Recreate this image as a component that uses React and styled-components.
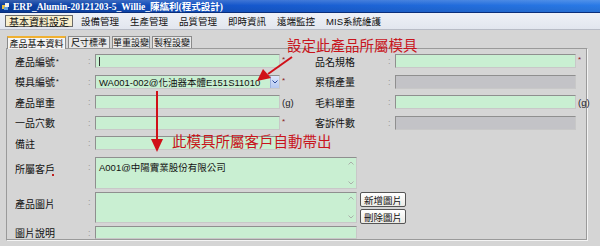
import React from 'react'
import styled, { createGlobalStyle } from 'styled-components'

const GlobalStyle = createGlobalStyle`
  html, body { margin: 0; padding: 0; background: #d5d5d5; overflow: hidden; }
  * { box-sizing: border-box; }
`

const CJK = `"Liberation Sans", "Noto Sans CJK TC", sans-serif`

const Window = styled.div`
  position: relative;
  width: 600px;
  height: 246px;
  background: #d5d5d5;
  font-family: ${CJK};
  overflow: hidden;
`

const TitleBar = styled.div`
  height: 13px;
  display: flex;
  align-items: center;
  gap: 3px;
  padding-left: 2px;
  background: linear-gradient(180deg, rgba(255,255,255,0.18), rgba(255,255,255,0) 45%, rgba(0,0,0,0.08)),
    linear-gradient(90deg, #0b3d9c 0%, #1557cc 40%, #2a7ae6 100%);
  border-bottom: 1px solid #0a2e7a;
  color: #fff;
  font-family: "Liberation Serif", "Noto Sans CJK TC", serif;
  font-weight: bold;
  font-size: 9.5px;
  white-space: nowrap;
`

const MenuBar = styled.div`
  height: 17px;
  display: flex;
  align-items: center;
  padding-left: 5px;
  background: linear-gradient(180deg, #eef1f7, #e2e6ee);
  border-bottom: 1px solid #b8bcc6;
`

const MenuItem = styled.div`
  height: 12px;
  display: flex;
  align-items: center;
  padding: 0 ${p => (p.$active ? 3 : 2)}px;
  margin-right: ${p => (p.$active ? 5 : 5)}px;
  font-size: ${p => (p.$active ? 10 : 9.5)}px;
  color: #111;
  white-space: nowrap;
  background: ${p => (p.$active ? '#f8eecb' : 'transparent')};
  border: 1px solid ${p => (p.$active ? '#6a6a6a' : 'transparent')};
`

const Content = styled.div`
  padding: 6px 0 0 6px;
`

const Tabs = styled.div`
  display: flex;
  align-items: flex-end;
  gap: 2px;
  padding-left: 1px;
  height: 12px;
`

const Tab = styled.div`
  height: ${p => (p.$active ? 13 : 12)}px;
  width: ${p => p.$w}px;
  display: flex;
  align-items: center;
  justify-content: center;
  font-size: 9px;
  white-space: nowrap;
  color: #111;
  background: ${p => (p.$active ? '#f4f4f4' : '#e8e8e8')};
  border: 1px solid #8a8a8a;
  border-bottom: none;
  ${p => p.$active && 'border-top: 2px solid #f0b030; margin-bottom: -1px; position: relative; z-index: 1;'}
`

const Panel = styled.div`
  width: 582px;
  height: 193px;
  border: 1px solid #9a9a9a;
  border-right-color: #f4f4f4;
  border-bottom-color: #f4f4f4;
  box-shadow: inset -1px -1px 0 #9a9a9a;
  padding: 5px 0 0 8px;
`

const Grid = styled.div`
  display: grid;
  grid-template-columns: 73px 7px 185px 35px 73px 7px 181px 12px;
  grid-auto-rows: 14px;
  row-gap: 6.5px;
`

const Label = styled.div`
  font-size: 10px;
  color: #111;
  display: flex;
  align-items: ${p => (p.$top ? 'flex-start' : 'center')};
  padding-top: ${p => (p.$top ? 4 : 0)}px;
  position: relative;
  white-space: nowrap;
  sup { font-size: 7px; margin-left: 1px; }
`

const ReqDot = styled.span`
  position: absolute;
  left: 37px;
  top: 17px;
  width: 2px;
  height: 2px;
  background: #c02020;
`

const Colon = styled.div`
  font-size: 9px;
  color: #9a9a9a;
  display: flex;
  align-items: ${p => (p.$top ? 'flex-start' : 'center')};
  padding-top: ${p => (p.$top ? 5 : 0)}px;
`

const Field = styled.div`
  height: ${p => p.$h || 14}px;
  width: ${p => (p.$w ? `${p.$w}px` : 'auto')};
  background: ${p => (p.$grey ? '#c3c3c7' : '#c9efd2')};
  border: 1px solid #8f8f8f;
  border-right-color: #c8c8c8;
  border-bottom-color: #c8c8c8;
  display: flex;
  align-items: ${p => (p.$top ? 'flex-start' : 'center')};
  padding: ${p => (p.$top ? '2px 3px' : '0 3px')};
  font-size: 9.5px;
  color: #111;
  position: relative;
  white-space: nowrap;
`

const Caret = styled.span`
  width: 1px;
  height: 9px;
  background: #333;
`

const ComboButton = styled.div`
  position: absolute;
  right: 0;
  top: 0;
  bottom: 0;
  width: 9px;
  background: linear-gradient(180deg, #dbe6fb, #b5c8ef);
  border-left: 1px solid #9fb3de;
  display: flex;
  align-items: center;
  justify-content: center;
`

const Suffix = styled.div`
  font-size: ${p => (p.$star ? 8 : 9.5)}px;
  color: ${p => (p.$star ? '#8a2020' : '#222')};
  display: flex;
  align-items: ${p => (p.$star ? 'flex-start' : 'center')};
  padding-left: 2px;
  padding-top: ${p => (p.$star ? 1 : 0)}px;
`

const Lower = styled.div`
  display: flex;
  flex-direction: column;
  gap: 3px;
  margin-top: 7px;
`

const LowerRow = styled.div`
  display: flex;
  height: ${p => p.$h}px;
`

const LabelBox = styled(Label)`
  width: 73px;
`

const ColonBox = styled(Colon)`
  width: 7px;
`

const ScrollTrack = styled.div`
  position: absolute;
  right: 1px;
  top: 1px;
  bottom: 1px;
  width: 8px;
  display: flex;
  flex-direction: column;
  justify-content: space-between;
  align-items: center;
  padding: 2px 0;
`

const Buttons = styled.div`
  display: flex;
  flex-direction: column;
  gap: 2px;
  margin-left: 3px;
`

const Button = styled.div`
  width: 46px;
  height: 15px;
  border: 1px solid #555;
  border-radius: 2px;
  background: linear-gradient(180deg, #ffffff, #ecebe6);
  font-size: 9.5px;
  color: #111;
  display: flex;
  align-items: center;
  justify-content: center;
`

const Note = styled.div`
  position: absolute;
  left: ${p => p.$x}px;
  top: ${p => p.$y}px;
  color: #c8141c;
  font-family: "Noto Sans CJK TC", sans-serif;
  font-size: 14.5px;
  line-height: 1;
  white-space: nowrap;
`

const Overlay = styled.svg`
  position: absolute;
  left: 0;
  top: 0;
  pointer-events: none;
`

function AppIcon() {
  return (
    <svg width="8" height="9" viewBox="0 0 8 9">
      <rect x="0" y="3" width="4" height="4" fill="#e8c040" />
      <rect x="3" y="1" width="4" height="4" fill="#f0f0f0" />
      <rect x="2" y="5" width="4" height="3" fill="#60a0e0" />
    </svg>
  )
}

function Chevron({ up, color = '#aab0aa' }) {
  return (
    <svg width="6" height="4" viewBox="0 0 6 4">
      <path d={up ? 'M0.5 3.5 L3 1 L5.5 3.5' : 'M0.5 0.5 L3 3 L5.5 0.5'} stroke={color} strokeWidth="1" fill="none" />
    </svg>
  )
}

function Scroll() {
  return (
    <ScrollTrack>
      <Chevron up />
      <Chevron />
    </ScrollTrack>
  )
}

const menus = [
  { t: '基本資料設定', active: true },
  { t: '設備管理' },
  { t: '生產管理' },
  { t: '品質管理' },
  { t: '即時資訊' },
  { t: '遠端監控' },
  { t: 'MIS系統維護' },
]

const tabs = [
  { t: '產品基本資料', w: 59, active: true },
  { t: '尺寸標準', w: 42 },
  { t: '單重設變', w: 38 },
  { t: '製程設變', w: 40 },
]

export default function App() {
  return (
    <Window>
      <GlobalStyle />
      <TitleBar>
        <AppIcon />
        <span>ERP_Alumin-20121203-5_Willie_陳紘利(程式設計)</span>
      </TitleBar>
      <MenuBar>
        {menus.map(m => (
          <MenuItem key={m.t} $active={m.active}>{m.t}</MenuItem>
        ))}
      </MenuBar>
      <Content>
        <Tabs>
          {tabs.map(t => (
            <Tab key={t.t} $w={t.w} $active={t.active}>{t.t}</Tab>
          ))}
        </Tabs>
        <Panel>
          <Grid>
            <Label>產品編號<sup>*</sup></Label>
            <Colon>:</Colon>
            <Field><Caret /></Field>
            <Suffix $star>*</Suffix>
            <Label>品名規格</Label>
            <Colon>:</Colon>
            <Field />
            <Suffix $star>*</Suffix>

            <Label>模具編號<sup>*</sup></Label>
            <Colon>:</Colon>
            <Field>
              WA001-002@化油器本體E151S11010
              <ComboButton>
                <Chevron color="#2a4a9a" />
              </ComboButton>
            </Field>
            <Suffix $star>*</Suffix>
            <Label>累積產量</Label>
            <Colon>:</Colon>
            <Field $grey />
            <Suffix />

            <Label>產品單重</Label>
            <Colon>:</Colon>
            <Field />
            <Suffix>(g)</Suffix>
            <Label>毛料單重</Label>
            <Colon>:</Colon>
            <Field />
            <Suffix>(g)</Suffix>

            <Label>一品穴數</Label>
            <Colon>:</Colon>
            <Field />
            <Suffix $star>*</Suffix>
            <Label>客訴件數</Label>
            <Colon>:</Colon>
            <Field $grey />
            <Suffix />

            <Label>備註</Label>
            <Colon>:</Colon>
            <Field />
          </Grid>

          <Lower>
            <LowerRow $h={32}>
              <LabelBox $top>所屬客戶<ReqDot /></LabelBox>
              <ColonBox $top>:</ColonBox>
              <Field $w={262} $h={32} $top>
                A001@中陽實業股份有限公司
                <Scroll />
              </Field>
            </LowerRow>
            <LowerRow $h={31}>
              <LabelBox $top>產品圖片</LabelBox>
              <ColonBox $top>:</ColonBox>
              <Field $w={262} $h={31} $top>
                <Scroll />
              </Field>
              <Buttons>
                <Button>新增圖片</Button>
                <Button>刪除圖片</Button>
              </Buttons>
            </LowerRow>
            <LowerRow $h={13}>
              <LabelBox>圖片說明</LabelBox>
              <ColonBox>:</ColonBox>
              <Field $w={262} $h={13} />
            </LowerRow>
          </Lower>
        </Panel>
      </Content>

      <Note $x={287} $y={38}>設定此產品所屬模具</Note>
      <Note $x={172} $y={134}>此模具所屬客戶自動帶出</Note>

      <Overlay width="600" height="246">
        <line x1="292" y1="57" x2="268" y2="74" stroke="#d01018" strokeWidth="2" />
        <polygon points="257,81 263,69 271,78" fill="#d01018" />
        <line x1="157" y1="91" x2="157" y2="140" stroke="#d01018" strokeWidth="2" />
        <polygon points="151,139 163,139 157,152" fill="#d01018" />
      </Overlay>
    </Window>
  )
}
